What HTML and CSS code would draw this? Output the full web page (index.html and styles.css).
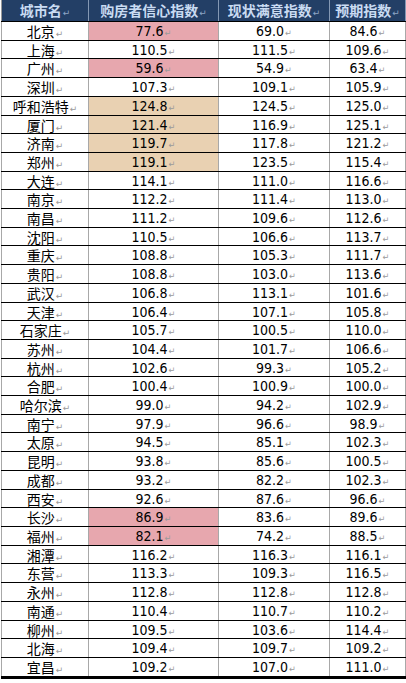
FILE: index.html
```html
<!DOCTYPE html>
<html lang="zh-CN">
<head>
<meta charset="utf-8">
<title>购房者信心指数</title>
<link rel="stylesheet" href="styles.css">
</head>
<body>
<table class="idx">
  <thead>
    <tr>
      <th class="c1">城市名<span class="pm">↵</span></th>
      <th class="c2">购房者信心指数<span class="pm">↵</span></th>
      <th class="c3">现状满意指数<span class="pm">↵</span></th>
      <th class="c4">预期指数<span class="pm">↵</span></th>
      <th class="end"><span class="em">↵</span></th>
    </tr>
  </thead>
  <tbody id="rows"></tbody>
</table>
<script src="app.js"></script>
</body>
</html>
```

FILE: app.js
```js
var data = [
  ["北京","77.6","69.0","84.6","pink"],
  ["上海","110.5","111.5","109.6",""],
  ["广州","59.6","54.9","63.4","pink"],
  ["深圳","107.3","109.1","105.9",""],
  ["呼和浩特","124.8","124.5","125.0","tan"],
  ["厦门","121.4","116.9","125.1","tan"],
  ["济南","119.7","117.8","121.2","tan"],
  ["郑州","119.1","123.5","115.4","tan"],
  ["大连","114.1","111.0","116.6",""],
  ["南京","112.2","111.4","113.0",""],
  ["南昌","111.2","109.6","112.6",""],
  ["沈阳","110.5","106.6","113.7",""],
  ["重庆","108.8","105.3","111.7",""],
  ["贵阳","108.8","103.0","113.6",""],
  ["武汉","106.8","113.1","101.6",""],
  ["天津","106.4","107.1","105.8",""],
  ["石家庄","105.7","100.5","110.0",""],
  ["苏州","104.4","101.7","106.6",""],
  ["杭州","102.6","99.3","105.2",""],
  ["合肥","100.4","100.9","100.0",""],
  ["哈尔滨","99.0","94.2","102.9",""],
  ["南宁","97.9","96.6","98.9",""],
  ["太原","94.5","85.1","102.3",""],
  ["昆明","93.8","85.6","100.5",""],
  ["成都","93.2","82.2","102.3",""],
  ["西安","92.6","87.6","96.6",""],
  ["长沙","86.9","83.6","89.6","pink"],
  ["福州","82.1","74.2","88.5","pink"],
  ["湘潭","116.2","116.3","116.1",""],
  ["东营","113.3","109.3","116.5",""],
  ["永州","112.8","112.8","112.8",""],
  ["南通","110.4","110.7","110.2",""],
  ["柳州","109.5","103.6","114.4",""],
  ["北海","109.4","109.7","109.2",""],
  ["宜昌","109.2","107.0","111.0",""]
];
var tb = document.getElementById("rows");
var html = "";
data.forEach(function (r) {
  html += "<tr>" +
    "<td class=\"c1 city\"><div class=\"cell\">" + r[0] + "<span class=\"pm\">↵</span></div></td>" +
    "<td class=\"c2 num" + (r[4] ? " " + r[4] : "") + "\"><div class=\"cell\">" + r[1] + "<span class=\"pm\">↵</span></div></td>" +
    "<td class=\"c3 num\"><div class=\"cell\">" + r[2] + "<span class=\"pm\">↵</span></div></td>" +
    "<td class=\"c4 num\"><div class=\"cell\">" + r[3] + "<span class=\"pm\">↵</span></div></td>" +
    "<td class=\"end\"><div class=\"cell\"><span class=\"em\">↵</span></div></td>" +
    "</tr>";
});
tb.innerHTML = html;
```

FILE: styles.css
```css
html, body {
  margin: 0;
  padding: 0;
  background: #ffffff;
}
body {
  padding-left: 1px;
  font-family: "Noto Sans CJK SC", "Liberation Sans", sans-serif;
  color: #000;
}
.idx {
  border-collapse: collapse;
  table-layout: fixed;
  width: 405px;
}
.idx th, .idx td {
  padding: 0;
  text-align: center;
  vertical-align: middle;
  white-space: nowrap;
  overflow: hidden;
}
.c1 { width: 86px; }
.c2 { width: 129px; }
.c3 { width: 110px; }
.c4 { width: 75px; }
.idx th.end, .idx td.end {
  width: 5px;
  border: none;
  text-align: left;
  background: transparent;
}
.idx thead th {
  height: 21px;
  padding: 0;
  background: #233f66;
  color: #c9dbf2;
  font-size: 14px;
  font-weight: 700;
  line-height: 21px;
  border-bottom: 1px solid #000;
  border-left: 1px solid #8498b4;
  border-right: 1px solid #8498b4;
}
.idx thead th.c1 { border-left: 1px solid #9a9a9a; }
.idx thead th .pm { color: #8ea6c6; }
.idx tbody td {
  border-top: 1px solid #000;
  border-bottom: 1px solid #000;
  border-left: 1px solid #a8a8a8;
  border-right: 1px solid #a8a8a8;
}
.cell {
  height: 17.71px;
  line-height: 18px;
  overflow: hidden;
}
.idx tbody tr:last-child td { border-bottom: 3px solid #000; }
.idx tbody tr:last-child td.end { border-bottom: none; }
.city {
  font-size: 14px;
}
.num {
  font-family: "Liberation Sans Narrow", "DejaVu Sans Condensed", "Liberation Sans", sans-serif;
  font-stretch: condensed;
  font-size: 14px;
}
.pink { background: #e7a7ae; }
.tan { background: #e9d1b2; }
.pm {
  font-family: "DejaVu Sans", sans-serif;
  font-size: 9px;
  line-height: 0;
  color: #9a9a9a;
  margin-left: 1px;
  font-weight: 400;
}
.em {
  font-family: "DejaVu Sans", sans-serif;
  font-size: 4px;
  line-height: 0;
  color: #9a9a9a;
  margin-left: 1px;
}
```
